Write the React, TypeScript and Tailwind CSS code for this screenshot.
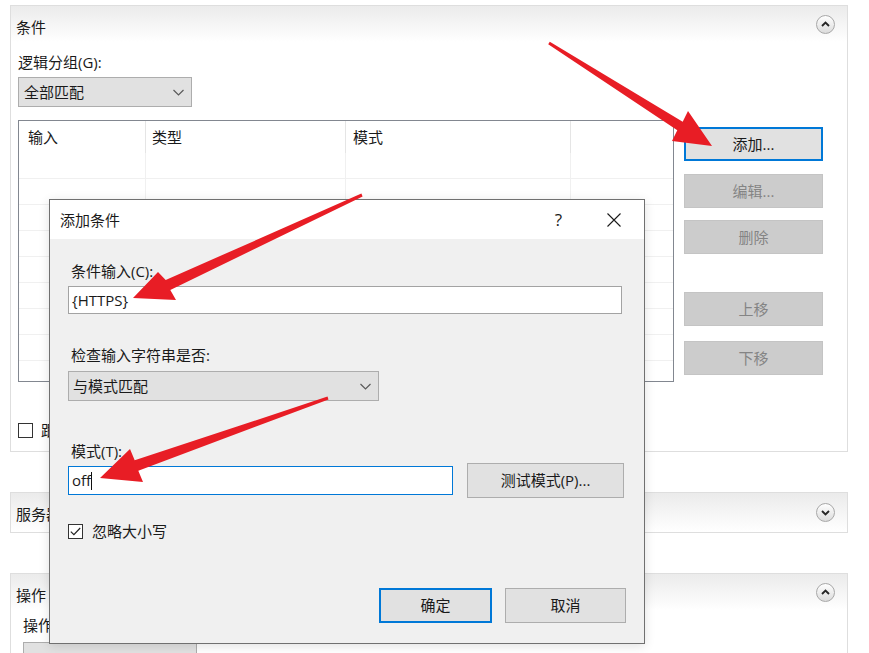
import React from 'react'

function RoundToggle({ up }: { up: boolean }) {
  return (
    <div className="w-[19px] h-[19px] rounded-full border border-[#a8a8a8] bg-gradient-to-b from-white to-[#dcdcdc] flex items-center justify-center">
      <svg width="9" height="6" viewBox="0 0 9 6">
        <path d={up ? 'M1 5 L4.5 1.6 L8 5' : 'M1 1 L4.5 4.4 L8 1'} fill="none" stroke="#262626" strokeWidth="1.9" />
      </svg>
    </div>
  )
}

function Chevron() {
  return (
    <svg width="11" height="7" viewBox="0 0 11 7">
      <path d="M0.5 1 L5.5 6 L10.5 1" fill="none" stroke="#5a5a5a" strokeWidth="1.2" />
    </svg>
  )
}

function PanelHeader({ title, up }: { title: string; up: boolean }) {
  return (
    <div className="h-[36px] bg-gradient-to-b from-[#ebebeb] to-white flex items-center justify-between pl-[5px] pr-[12px]">
      <span className="leading-[20px] mt-[5px]">{title}</span>
      <RoundToggle up={up} />
    </div>
  )
}

const cols = ['w-[127px]', 'w-[200px]', 'w-[225px]']

function ListRow({ last }: { last?: boolean }) {
  return (
    <div className={last ? 'flex h-[19px]' : 'flex h-[26px] border-b border-[#f0f0f0]'}>
      <div className="w-[127px] border-r border-[#f0f0f0]" />
      <div className="w-[200px] border-r border-[#f0f0f0]" />
      <div className="w-[225px] border-r border-[#f0f0f0]" />
      <div className="flex-1" />
    </div>
  )
}

function SideButton({ label, primary }: { label: string; primary?: boolean }) {
  return primary ? (
    <div className="w-[139px] h-[34px] border-2 border-[#0078d7] bg-[#e1e1e1] flex items-center justify-center text-[#1a1a1a]">
      {label}
    </div>
  ) : (
    <div className="w-[139px] h-[34px] border border-[#c4c4c4] bg-[#cccccc] flex items-center justify-center text-[#848484]">
      {label}
    </div>
  )
}

function Arrows() {
  return (
    <svg className="absolute inset-0 pointer-events-none" width="869" height="653" viewBox="0 0 869 653">
      <g fill="#e81d25">
        <polygon points="549.8,41.7 682.7,121.8 688,111 712,146 672,141 677.3,130.2 548.2,44.3" />
        <polygon points="361.4,193.6 165.7,280 158,272 133,298 176,300 170.3,290 362.6,196.4" />
        <polygon points="327.5,396.6 134.7,460.3 130,449 100,478 143,482 138.3,470.7 328.5,399.4" />
      </g>
    </svg>
  )
}

export default function App() {
  return (
    <div className="relative w-[869px] h-[653px] overflow-hidden bg-white text-[15px] text-[#1a1a1a] font-['Open_Sans','Noto_Sans_CJK_SC',sans-serif]">
      <div className="flex flex-col pl-[10px] pt-[5px] gap-[40px]">
        {/* 条件 */}
        <div className="w-[838px] h-[447px] border border-[#dedede] flex flex-col">
          <PanelHeader title="条件" up />
          <div className="pl-[7px] flex flex-col">
            <div className="mt-[10px] leading-[20px]">逻辑分组(G):</div>
            <div className="mt-[5px] w-[174px] h-[30px] bg-[#e1e1e1] border border-[#adadad] flex items-center justify-between pl-[5px] pr-[7px]">
              <span>全部匹配</span>
              <Chevron />
            </div>
            <div className="mt-[13px] flex">
              <div className="w-[656px] h-[262px] border border-[#828790] flex flex-col">
                <div className="flex h-[32px]">
                  <div className={cols[0] + ' border-r border-[#e5e5e5] pl-[9px] pt-[6px] leading-[20px]'}>输入</div>
                  <div className={cols[1] + ' border-r border-[#e5e5e5] pl-[6px] pt-[6px] leading-[20px]'}>类型</div>
                  <div className={cols[2] + ' border-r border-[#e5e5e5] pl-[7px] pt-[6px] leading-[20px]'}>模式</div>
                  <div className="flex-1" />
                </div>
                <ListRow />
                <ListRow />
                <ListRow />
                <ListRow />
                <ListRow />
                <ListRow />
                <ListRow />
                <ListRow />
                <ListRow last />
              </div>
              <div className="ml-[10px] mt-[7px] flex flex-col">
                <SideButton label="添加..." primary />
                <div className="mt-[13px]"><SideButton label="编辑..." /></div>
                <div className="mt-[12px]"><SideButton label="删除" /></div>
                <div className="mt-[38px]"><SideButton label="上移" /></div>
                <div className="mt-[15px]"><SideButton label="下移" /></div>
              </div>
            </div>
            <div className="mt-[38px] h-[20px] flex items-center gap-[8px]">
              <div className="w-[15px] h-[15px] border border-[#333] bg-white" />
              <span className="leading-[20px]">跟踪捕获组跨条件</span>
            </div>
          </div>
        </div>

        {/* 服务器变量 */}
        <div className="w-[838px] h-[41px] border border-[#dedede]">
          <div className="h-[39px] bg-gradient-to-b from-[#ebebeb] to-white flex items-center justify-between pl-[5px] pr-[12px]">
            <span className="leading-[20px] mt-[2px]">服务器变量</span>
            <RoundToggle up={false} />
          </div>
        </div>

        {/* 操作 */}
        <div className="w-[838px] h-[120px] border border-[#dedede] flex flex-col">
          <PanelHeader title="操作" up />
          <div className="pl-[12px] flex flex-col">
            <div className="mt-[5px] leading-[20px]">操作类型(Y):</div>
            <div className="mt-[7px] w-[174px] h-[30px] bg-[#e1e1e1] border border-[#adadad]" />
          </div>
        </div>
      </div>

      {/* 添加条件 dialog */}
      <div className="absolute left-[49px] top-[199px] w-[596px] h-[445px] border border-[#707070] bg-[#f0f0f0] flex flex-col shadow-[0_2px_10px_rgba(0,0,0,0.12)]">
        <div className="h-[39px] bg-white flex items-center justify-between pl-[10px] pr-[23px]">
          <span className="leading-[20px]">添加条件</span>
          <div className="flex items-center gap-[45px]">
            <span className="leading-[20px] text-[17px]">?</span>
            <svg width="14" height="14" viewBox="0 0 14 14">
              <path d="M0.5 0.5 L13.5 13.5 M13.5 0.5 L0.5 13.5" stroke="#1a1a1a" strokeWidth="1.1" />
            </svg>
          </div>
        </div>
        <div className="pl-[18px] flex flex-col">
          <div className="mt-[22px] ml-[3px] leading-[20px]">条件输入(C):</div>
          <div className="mt-[5px] w-[554px] h-[28px] bg-white border border-[#a3a3a3] flex items-center pl-[3px]">
            {'{HTTPS}'}
          </div>
          <div className="mt-[31px] ml-[3px] leading-[20px]">检查输入字符串是否:</div>
          <div className="mt-[6px] w-[311px] h-[30px] bg-[#e1e1e1] border border-[#adadad] flex items-center justify-between pl-[4px] pr-[7px]">
            <span>与模式匹配</span>
            <Chevron />
          </div>
          <div className="mt-[40px] ml-[3px] leading-[20px]">模式(T):</div>
          <div className="mt-[2px] flex items-center h-[35px]">
            <div className="w-[385px] h-[29px] bg-white border border-[#0078d7] flex items-center pl-[3px]">
              <span>off</span>
              <span className="w-px h-[18px] bg-[#111]" />
            </div>
            <div className="ml-[14px] w-[157px] h-[35px] bg-[#e1e1e1] border border-[#adadad] flex items-center justify-center">
              测试模式(P)...
            </div>
          </div>
          <div className="mt-[23px] h-[20px] flex items-center gap-[9px]">
            <div className="w-[15px] h-[15px] border border-[#333] bg-white flex items-center justify-center">
              <svg width="11" height="9" viewBox="0 0 11 9">
                <path d="M0.8 4.6 L3.9 7.7 L10.2 1" fill="none" stroke="#222" strokeWidth="1.2" />
              </svg>
            </div>
            <span className="leading-[20px]">忽略大小写</span>
          </div>
          <div className="mt-[47px] flex justify-end pr-[18px] gap-[13px]">
            <div className="w-[113px] h-[35px] border-2 border-[#0078d7] bg-[#e1e1e1] flex items-center justify-center">确定</div>
            <div className="w-[121px] h-[35px] border border-[#adadad] bg-[#e1e1e1] flex items-center justify-center">取消</div>
          </div>
        </div>
      </div>

      <Arrows />
    </div>
  )
}
